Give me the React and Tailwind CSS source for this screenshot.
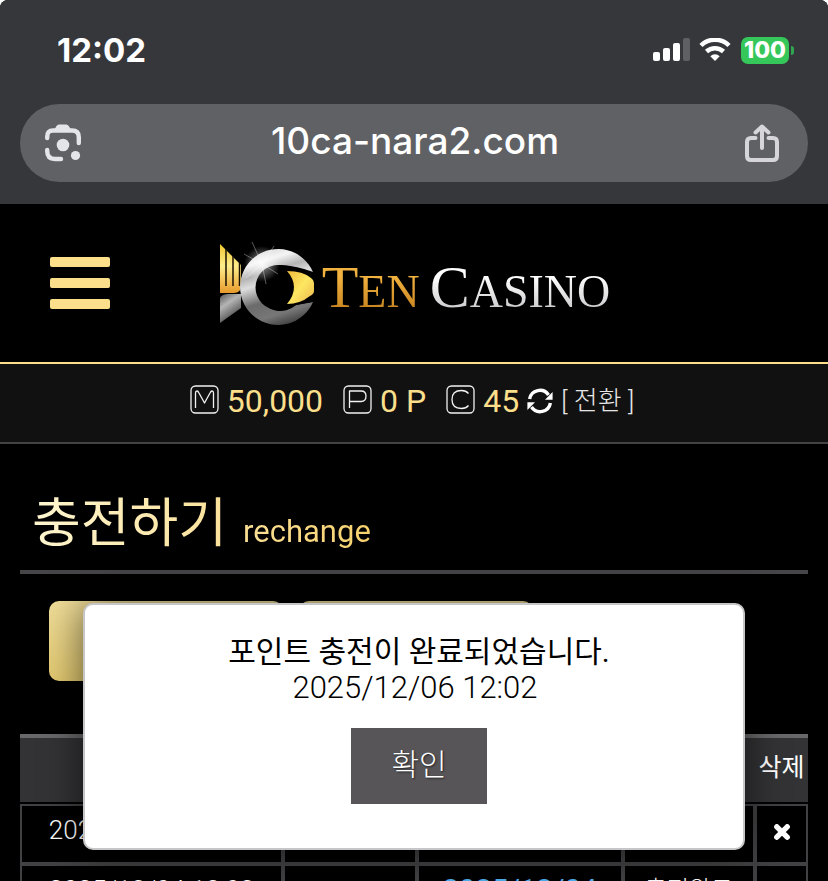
const rows = [
  { date: '2025/12/06 12:02', amount: '', done: '', status: '' },
  { date: '2025/12/04 12:02', amount: '', done: '2025/12/04', status: '충전완료' },
];

const StatusBar = () => (
  <div className="flex h-[104px] items-center justify-between pr-[34px] pb-1 pl-[57px] font-['Inter',sans-serif]">
    <span className="text-[33px] leading-10 font-bold">12:02</span>
    <div className="flex items-center">
      <svg className="h-6 w-[38px]" viewBox="0 0 38 24" fill="#fff">
        <rect x="0" y="14" width="7" height="9" rx="2" />
        <rect x="10" y="10" width="7" height="13" rx="2" />
        <rect x="20" y="5" width="7" height="18" rx="2" />
        <rect x="30" y="0" width="7" height="23" rx="2" fill="#5f6063" />
      </svg>
      <svg className="ml-2 h-6 w-8" viewBox="0 0 32 24" fill="none" stroke="#fff">
        <path d="M2 7.5A20 20 0 0 1 30 7.5" strokeWidth="4.5" />
        <path d="M7.5 13.5A12.5 12.5 0 0 1 24.5 13.5" strokeWidth="4.5" />
        <path d="M16 23L11.3 18.2A6.8 6.8 0 0 1 20.7 18.2Z" fill="#fff" stroke="none" />
      </svg>
      <div className="ml-[10px] flex h-[27px] w-12 items-center justify-center rounded-[7px] bg-[#35c75a]">
        <span className="text-[23px] leading-6 font-extrabold">100</span>
      </div>
      <span className="ml-[2px] h-[9px] w-[3px] rounded-r-full bg-[#30a550]" />
    </div>
  </div>
);

const AddressBar = () => (
  <div className="mx-5 flex h-[78px] items-center justify-between rounded-full bg-[#606165] px-6">
    <button type="button" aria-label="Lens">
      <svg className="h-[38px] w-[38px]" viewBox="0 0 38 38" fill="none">
        <path
          d="M3.2 14V13Q3.2 6.5 9 6.5H28Q34.8 6.5 34.8 13V19"
          stroke="#e4e5e8"
          strokeWidth="4.4"
          strokeLinecap="round"
        />
        <path d="M9.5 7L12.5 2Q13.3 .5 15 .5H22Q24 .5 24.7 2L28 7V8H9.5Z" fill="#e4e5e8" />
        <path
          d="M3.2 26V27Q3.2 35 11 35H17"
          stroke="#e4e5e8"
          strokeWidth="4.4"
          strokeLinecap="round"
        />
        <circle cx="19" cy="21" r="6.3" fill="#e4e5e8" />
        <circle cx="31.5" cy="31.5" r="4.6" fill="#e4e5e8" />
      </svg>
    </button>
    <span className="pb-1 pl-1 font-['Inter',sans-serif] text-[37px] leading-12 font-medium">10ca-nara2.com</span>
    <button type="button" aria-label="Share" className="pr-1">
      <svg
        className="h-[38px] w-[36px]"
        viewBox="0 0 36 38"
        fill="none"
        stroke="#d6d6da"
        strokeWidth="4"
        strokeLinecap="round"
        strokeLinejoin="round"
      >
        <path d="M11.5 14H7Q3 14 3 18V32Q3 36 7 36H29Q33 36 33 32V18Q33 14 29 14H24.5" />
        <path d="M18 24V2.5M11.5 8.5L18 2.5L24.5 8.5" />
      </svg>
    </button>
  </div>
);

const Emblem = () => (
  <svg className="mt-1 h-[90px] w-[100px]" viewBox="0 0 100 90">
    <defs>
      <linearGradient id="gold" x1="0" y1="0" x2="0" y2="1">
        <stop offset="0" stopColor="#f1c62f" />
        <stop offset="0.45" stopColor="#fdee8a" />
        <stop offset="1" stopColor="#e79a2c" />
      </linearGradient>
      <linearGradient id="eye" x1="0" y1="0" x2="1" y2="1">
        <stop offset="0" stopColor="#f0b93c" />
        <stop offset="0.5" stopColor="#fde762" />
        <stop offset="1" stopColor="#ecb54c" />
      </linearGradient>
      <linearGradient id="silver" x1="0.3" y1="0" x2="0.6" y2="1">
        <stop offset="0" stopColor="#d8d8d8" />
        <stop offset="0.15" stopColor="#f4f4f4" />
        <stop offset="0.3" stopColor="#b5b5b5" />
        <stop offset="0.42" stopColor="#dedede" />
        <stop offset="0.65" stopColor="#6b6b6b" />
        <stop offset="0.85" stopColor="#777" />
        <stop offset="1" stopColor="#444" />
      </linearGradient>
      <linearGradient id="tail" x1="0" y1="0" x2="0.5" y2="1">
        <stop offset="0" stopColor="#555" />
        <stop offset="0.4" stopColor="#b5b5b5" />
        <stop offset="1" stopColor="#3e3e3e" />
      </linearGradient>
      <radialGradient id="glow">
        <stop offset="0" stopColor="#fff" />
        <stop offset="0.35" stopColor="#fff" stopOpacity="0.5" />
        <stop offset="1" stopColor="#fff" stopOpacity="0" />
      </radialGradient>
    </defs>
    <path d="M6 4L27 25V46Q27 53 20 53H6Z" fill="url(#gold)" />
    <path d="M12 9V46M19 16V46M25.5 23V46" stroke="#1b1203" strokeWidth="1.5" />
    <path d="M6 58Q8 54 14 54H27V68L6 83Z" fill="url(#tail)" />
    <path
      fillRule="evenodd"
      d="M99 32A38 38 0 1 0 99 62L82 65A23 23 0 1 1 66 25Q84 26 99 32Z"
      fill="url(#silver)"
    />
    <path d="M66 25Q84 26 99 36L98 62L82 65Q74 70 64 70A22.5 22.5 0 0 1 64 25Z" fill="#000" />
    <path d="M73 31Q89 31 97 38Q100 40 100 44V51Q100 54 96 56Q86 64 73 64Q87 47 73 31Z" fill="url(#eye)" />
    <circle cx="48" cy="24" r="18" fill="url(#glow)" opacity="0.8" />
    <path d="M38 2L48 24L52 44M30 14L48 24L64 34M60 6L48 24L32 38" stroke="#fff" strokeWidth="0.5" fill="none" opacity="0.7" />
  </svg>
);

const SiteHeader = () => (
  <header className="relative flex h-[158px] items-center justify-center bg-black">
    <button type="button" aria-label="Menu" className="absolute left-[50px] flex w-[60px] flex-col gap-[11px]">
      <span className="h-[10px] rounded-[2px] bg-[#fbdf8b]" />
      <span className="h-[10px] rounded-[2px] bg-[#fbdf8b]" />
      <span className="h-[10px] rounded-[2px] bg-[#fbdf8b]" />
    </button>
    <a href="#home" className="flex items-center gap-2 pr-1 font-['Liberation_Serif',serif] whitespace-nowrap">
      <Emblem />
      <span className="mt-3 flex items-baseline gap-[10px] text-[46px] leading-[60px]">
        <span className="bg-linear-to-b from-[#f2b23f] from-30% to-[#b87512] bg-clip-text text-transparent">
          <span className="text-[60px]">T</span>EN
        </span>
        <span className="bg-linear-to-b from-white from-30% to-[#b9b9bd] bg-clip-text text-transparent">
          <span className="text-[60px]">C</span>ASINO
        </span>
      </span>
    </a>
  </header>
);

const BoxIcon = ({ d }) => (
  <svg className="mb-1 h-[29px] w-[29px]" viewBox="0 0 29 29" fill="none" stroke="#f2f2f2" strokeLinejoin="round">
    <rect x="1" y="1" width="27" height="27" rx="4.5" strokeWidth="1.3" />
    <path d={d} strokeWidth="1.3" />
  </svg>
);

const BalanceBar = () => (
  <div className="flex h-[82px] items-center justify-center border-t-2 border-b-2 border-t-[#fbdf8b] border-b-[#434345] bg-[#111112] pr-1 pb-1 font-['Roboto','Noto_Sans_CJK_KR',sans-serif] text-[32px] leading-10 text-[#fbdf8b]">
    <BoxIcon d="M5.5 23V8Q5.5 6 7 6Q8 6 9 8L14.5 18L20 8Q21 6 22 6Q23.5 6 23.5 8V23" />
    <span className="ml-2">50,000</span>
    <div className="ml-5 flex items-center">
      <BoxIcon d="M6.5 23V6H18Q23 6 23 11Q23 16.5 18 16.5H6.5" />
      <span className="ml-2">0 P</span>
    </div>
    <div className="ml-5 flex items-center">
      <BoxIcon d="M22.5 8.5Q20 5.5 15.5 5.5Q6 5.5 6 14.5Q6 23.5 15.5 23.5Q20 23.5 22.5 20.5" />
      <span className="ml-2">45</span>
    </div>
    <button type="button" aria-label="Refresh" className="ml-2">
      <svg className="h-[26px] w-[26px]" viewBox="0 0 26 26" fill="none" stroke="#fff" strokeWidth="3.4">
        <path d="M2.6 11A10.4 10.4 0 0 1 21.5 7" />
        <path d="M23.4 15A10.4 10.4 0 0 1 4.5 19" />
        <path d="M25.6 4V11.8H18ZM.4 22V14.2H8Z" fill="#fff" stroke="none" />
      </svg>
    </button>
    <a href="#convert" className="ml-2 text-[26px] leading-10 font-light text-[#e6e6e6]">
      [ 전환 ]
    </a>
  </div>
);

const RechargeTable = () => (
  <table className="mt-[53px] w-full table-fixed border-separate border-spacing-0 text-center">
    <colgroup>
      <col className="w-[33.4%]" />
      <col className="w-[17%]" />
      <col className="w-[26.1%]" />
      <col className="w-[16.8%]" />
      <col className="w-[6.7%]" />
    </colgroup>
    <thead>
      <tr className="h-[70px]">
        {['', '', '', '', '삭제'].map((label, i) => (
          <th
            key={i}
            className="border-t-4 border-b-2 border-t-[#68686a] border-b-black bg-[#333335] p-0 pb-1 text-[25px] leading-8 font-normal whitespace-nowrap"
          >
            {label}
          </th>
        ))}
      </tr>
    </thead>
    <tbody className="text-[26px] leading-8 font-light">
      {rows.map((row) => (
        <tr key={row.date} className="h-[60px] *:border-2 *:border-[#414143] *:p-0 *:pb-2">
          <td className="pr-1">{row.date}</td>
          <td>{row.amount}</td>
          <td className="text-[29px] font-normal text-[#4fb0f0]">{row.done}</td>
          <td className="text-[24px]">{row.status}</td>
          <td>
            <button type="button" aria-label="삭제" className="mt-1 block w-full">
              <svg className="mx-auto h-4 w-4" viewBox="0 0 16 16" stroke="#fff" strokeWidth="5.4" strokeLinecap="round">
                <path d="M2.8 2.8L13.2 13.2M13.2 2.8L2.8 13.2" />
              </svg>
            </button>
          </td>
        </tr>
      ))}
    </tbody>
  </table>
);

const Modal = () => (
  <div className="absolute inset-x-0 top-[603px] flex justify-center">
    <div
      role="dialog"
      className="flex w-4/5 flex-col items-center rounded-[10px] border-2 border-[#c6c6c8] bg-white pt-[29px] pb-11 pl-[10px] text-black shadow-[0_0_40px_rgba(0,0,0,0.6)]"
    >
      <p className="text-[30px] leading-9">포인트 충전이 완료되었습니다.</p>
      <p className="pr-2 text-[31px] leading-9 font-light">2025/12/06 12:02</p>
      <button
        type="button"
        className="mt-[22px] h-[76px] w-[136px] bg-[#575558] pb-1 text-[30px] font-light text-white text-shadow-[1px_1px_2px_rgba(0,0,0,0.6)]"
      >
        확인
      </button>
    </div>
  </div>
);

const App = () => {
  return (
    <div className="relative h-screen overflow-hidden rounded-t-lg bg-black font-['Roboto','Noto_Sans_CJK_KR',sans-serif] text-white">
      <div className="h-[204px] bg-[#36373b]">
        <StatusBar />
        <AddressBar />
      </div>
      <SiteHeader />
      <BalanceBar />
      <main className="px-5">
        <h1 className="flex h-[130px] items-end border-b-4 border-[#464648] pb-[14px] pl-3">
          <span className="flex items-baseline gap-4 bg-linear-to-r from-[#fff6cf] to-[#f8d26d] bg-clip-text text-transparent">
            <span className="text-[53px] leading-[64px]">충전하기</span>
            <span className="text-[31px]">rechange</span>
          </span>
        </h1>
        <div className="mt-[27px] flex gap-4 pl-[29px]">
          <button type="button" aria-label="충전하기" className="h-20 w-[234px] rounded-[10px] bg-linear-to-b from-[#f0dd99] to-[#e2c970]" />
          <button type="button" aria-label="충전내역" className="h-20 w-[234px] rounded-[10px] bg-linear-to-b from-[#f0dd99] to-[#e2c970]" />
        </div>
        <RechargeTable />
      </main>
      <Modal />
    </div>
  );
};

export default App;
